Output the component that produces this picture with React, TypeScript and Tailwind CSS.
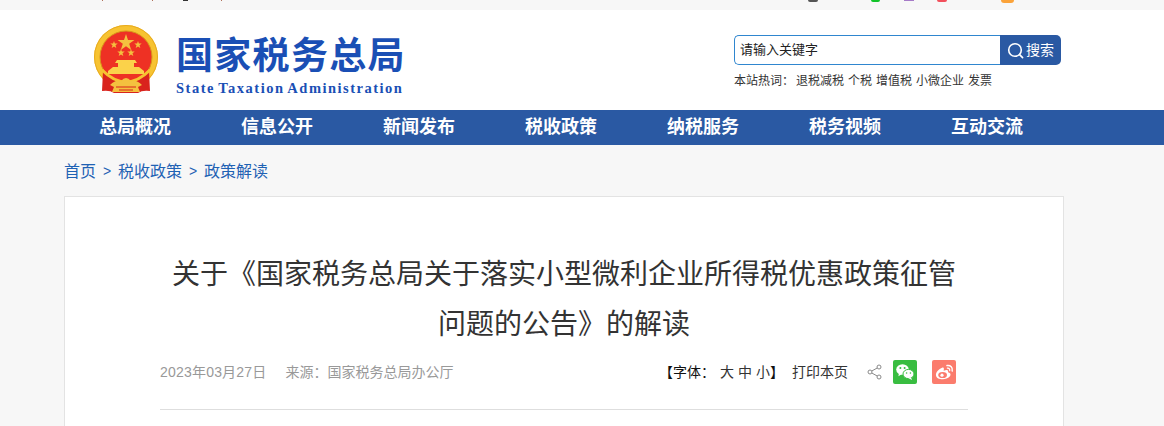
const cjk = "font-['Liberation_Sans','Noto_Sans_CJK_SC',sans-serif]";

const navItems = ["总局概况", "信息公开", "新闻发布", "税收政策", "纳税服务", "税务视频", "互动交流"];
const hotWords = ["退税减税", "个税", "增值税", "小微企业", "发票"];

function Emblem() {
  return (
    <svg width="64" height="68" viewBox="0 0 64 68" className="shrink-0">
      <circle cx="32" cy="32" r="32" fill="#f7c331" />
      <circle cx="32" cy="32" r="31.5" fill="none" stroke="#e8ab20" strokeWidth="1" />
      <circle cx="32" cy="32" r="26" fill="#ee3124" stroke="#d8951a" strokeWidth="1" />
      <polygon points="32,9 34,15 40.4,15 35.2,18.8 37.2,25 32,21.2 26.8,25 28.8,18.8 23.6,15 30,15" fill="#f4c13f" />
      <polygon points="20,16 20.9,18.6 23.7,18.6 21.5,20.3 22.3,23 20,21.4 17.7,23 18.5,20.3 16.3,18.6 19.1,18.6" fill="#f4c13f" />
      <polygon points="44,16 44.9,18.6 47.7,18.6 45.5,20.3 46.3,23 44,21.4 41.7,23 42.5,20.3 40.3,18.6 43.1,18.6" fill="#f4c13f" />
      <polygon points="27,24 27.9,26.6 30.7,26.6 28.5,28.3 29.3,31 27,29.4 24.7,31 25.5,28.3 23.3,26.6 26.1,26.6" fill="#f4c13f" />
      <polygon points="37,24 37.9,26.6 40.7,26.6 38.5,28.3 39.3,31 37,29.4 34.7,31 35.5,28.3 33.3,26.6 36.1,26.6" fill="#f4c13f" />
      <path d="M23 35 H41 L43 38 H40 V42 H45 L50 46 V49 H14 V46 L19 42 H24 V38 H21 Z" fill="#fbd24a" />
      <path d="M9 46 L8 66 Q16 65 20 68 H44 Q48 65 56 66 L55 46 Q32 70 9 46 Z" fill="#d9231d" />
      <path d="M8 45 Q32 69 56 45" fill="none" stroke="#f7c331" strokeWidth="3" />
      <path d="M16 60 Q22 54 27 56 Q32 50 37 56 Q42 54 48 60 L44 62 L46 67 H18 L20 62 Z" fill="#f4c13f" />
      <path d="M22 62 H42 M25 65 H39" fill="none" stroke="#d9231d" strokeWidth="1" />
    </svg>
  );
}

function WechatIcon() {
  return (
    <svg width="24" height="24" viewBox="0 0 24 24">
      <rect width="24" height="24" rx="2" fill="#39bd41" />
      <ellipse cx="9.5" cy="9.5" rx="6.3" ry="5.3" fill="#fff" />
      <path d="M6 13 L5.4 16.2 L9 14 Z" fill="#fff" />
      <ellipse cx="15.5" cy="14" rx="5.5" ry="4.6" fill="#fff" stroke="#39bd41" />
      <path d="M18 17.5 L19 20 L15.5 18.2 Z" fill="#fff" />
      <circle cx="7.4" cy="8" r="1" fill="#39bd41" />
      <circle cx="11.6" cy="8" r="1" fill="#39bd41" />
      <circle cx="13.6" cy="13" r="0.8" fill="#39bd41" />
      <circle cx="17.4" cy="13" r="0.8" fill="#39bd41" />
    </svg>
  );
}

function WeiboIcon() {
  return (
    <svg width="24" height="24" viewBox="0 0 24 24">
      <rect width="24" height="24" rx="2" fill="#fb7c6d" />
      <path d="M10.5 7.5 C6.5 9 3.5 12.5 4 15.5 C4.5 18.5 8 19.5 11 19.3 C15 19 18.5 17 18.5 14.5 C18.5 13 17 12.5 16 12.2 C16.6 10.6 15.6 9.6 13.5 10.2 L11.6 10.8 C12.2 8.6 12 7 10.5 7.5 Z" fill="#fff" />
      <ellipse cx="10.6" cy="15" rx="4.4" ry="3.1" fill="#fb7c6d" />
      <circle cx="10" cy="15.2" r="1.6" fill="#fff" />
      <path d="M15 5.6 C18.5 5 21 7.5 20.2 11" fill="none" stroke="#fff" strokeWidth="1.5" strokeLinecap="round" />
      <path d="M15.4 8.2 C17 8 18 9 17.7 10.6" fill="none" stroke="#fff" strokeWidth="1.2" strokeLinecap="round" />
    </svg>
  );
}

function ShareIcon() {
  return (
    <svg width="16" height="16" viewBox="0 0 16 16" fill="none" stroke="#8a8a8a" strokeWidth="1">
      <circle cx="12" cy="3" r="2" />
      <circle cx="3" cy="8" r="2" />
      <circle cx="12" cy="13" r="2" />
      <path d="M4.8 7 L10.2 4 M4.8 9 L10.2 12" />
    </svg>
  );
}

export default function App() {
  return (
    <div className={`h-[426px] w-[1164px] overflow-hidden bg-[#f7f7f7] ${cjk}`}>
      {/* top bar: only the clipped bottoms of its text and round icons are in view */}
      <div className="flex h-[10px] items-start overflow-hidden bg-[#f7f7f7]">
        <span className="ml-[102px] h-px w-px shrink-0 bg-[#b0705a]" />
        <span className="ml-[49px] h-px w-px shrink-0 bg-[#b0705a]" />
        <span className="ml-[30px] h-px w-[5px] shrink-0 bg-[#333]" />
        <span className="ml-[33px] h-px w-px shrink-0 bg-[#b0705a]" />
        <span className="ml-[586px] h-[2px] w-[10px] shrink-0 rounded-b-[5px] bg-[#555]" />
        <span className="ml-[53px] h-[2px] w-[9px] shrink-0 rounded-b-[5px] bg-[#12c32a]" />
        <span className="ml-[24px] h-px w-[10px] shrink-0 bg-[#a67bc8]" />
        <span className="ml-[23px] h-[2px] w-[10px] shrink-0 rounded-b-[5px] bg-[#f2505c]" />
        <span className="ml-[54px] h-[3px] w-[13px] shrink-0 rounded-b-[7px] bg-[#fba33a]" />
      </div>

      <header className="h-[100px] bg-white">
        <div className="ml-[65px] flex w-[1000px] justify-between">
          <div className="flex pl-[29px] pt-[15px]">
            <Emblem />
            <div className="ml-[18px] pt-[12px]">
              <div className="text-[37px] leading-[40px] font-bold tracking-[1.3px] whitespace-nowrap text-[#1a4fb5]">
                国家税务总局
              </div>
              <div className="mt-[3px] font-['Liberation_Serif',serif] text-[14.5px] leading-[16px] font-bold tracking-[1.5px] [word-spacing:-1.5px] whitespace-nowrap text-[#1a4fb5]">
                State Taxation Administration
              </div>
            </div>
          </div>

          <div className="pt-[25px] pr-[4px]">
            <div className="flex h-[30px] w-[327px]">
              <div className="flex-1 rounded-l-[5px] border border-r-0 border-[#2f86cf] bg-white pl-[5px] text-[13px] leading-[27px] text-[#222]">
                请输入关键字
              </div>
              <button className="flex w-[61px] items-center justify-center gap-[2px] rounded-r-[5px] bg-[#2a59a3] text-[14px] text-white">
                <svg width="17" height="17" viewBox="0 0 17 17" fill="none" stroke="#fff" strokeWidth="1.6">
                  <circle cx="8" cy="8" r="6.3" />
                  <path d="M12.6 12.6 L15.6 15.6" strokeLinecap="round" />
                </svg>
                搜索
              </button>
            </div>
            <div className="mt-[6px] flex text-[12px] leading-[20px] whitespace-nowrap text-[#333]">
              <span className="mr-[2px]">本站热词：</span>
              <div className="flex gap-[4px]">
                {hotWords.map((w) => (
                  <span key={w}>{w}</span>
                ))}
              </div>
            </div>
          </div>
        </div>
      </header>

      <nav className="h-[35px] bg-[#2a59a3]">
        <ul className="ml-[64px] flex">
          {navItems.map((n) => (
            <li key={n} className="w-[142px] text-center text-[18px] leading-[35px] font-bold text-white">
              {n}
            </li>
          ))}
        </ul>
      </nav>

      <div className="ml-[64px] flex h-[51px] items-center gap-[6px] pt-[2px] text-[16px] text-[#1f62b4]">
        <span>首页</span>
        <span className="w-[10px] text-center text-[14px]">&gt;</span>
        <span>税收政策</span>
        <span className="w-[10px] text-center text-[14px]">&gt;</span>
        <span>政策解读</span>
      </div>

      <main className="ml-[64px] h-[300px] w-[1000px] border border-[#e3e3e3] bg-white px-[95px]">
        <h1 className="mx-auto mt-[53px] w-[808px] text-center text-[28px] leading-[50px] font-normal text-[#333]">
          关于《国家税务总局关于落实小型微利企业所得税优惠政策征管
          <br />
          问题的公告》的解读
        </h1>

        <div className="mt-[4px] flex h-[36px] items-center justify-between text-[14px] text-[#999]">
          <div className="flex gap-[19px]">
            <span className="tracking-[0.2px]">2023年03月27日</span>
            <span>来源：国家税务总局办公厅</span>
          </div>
          <div className="flex items-center pr-[12px] text-[14px] text-[#333]">
            <span className="text-[#111]">【字体：</span>
            <span className="ml-[5px] flex gap-[4px]">
              <span>大</span>
              <span>中</span>
              <span>小</span>
            </span>
            <span className="text-[#111]">】</span>
            <span className="ml-[8px]">打印本页</span>
            <span className="ml-[19px]">
              <ShareIcon />
            </span>
            <span className="ml-[10px]">
              <WechatIcon />
            </span>
            <span className="ml-[15px]">
              <WeiboIcon />
            </span>
          </div>
        </div>
        <div className="mt-[19px] h-px w-[808px] bg-[#dedede]" />
      </main>
    </div>
  );
}
